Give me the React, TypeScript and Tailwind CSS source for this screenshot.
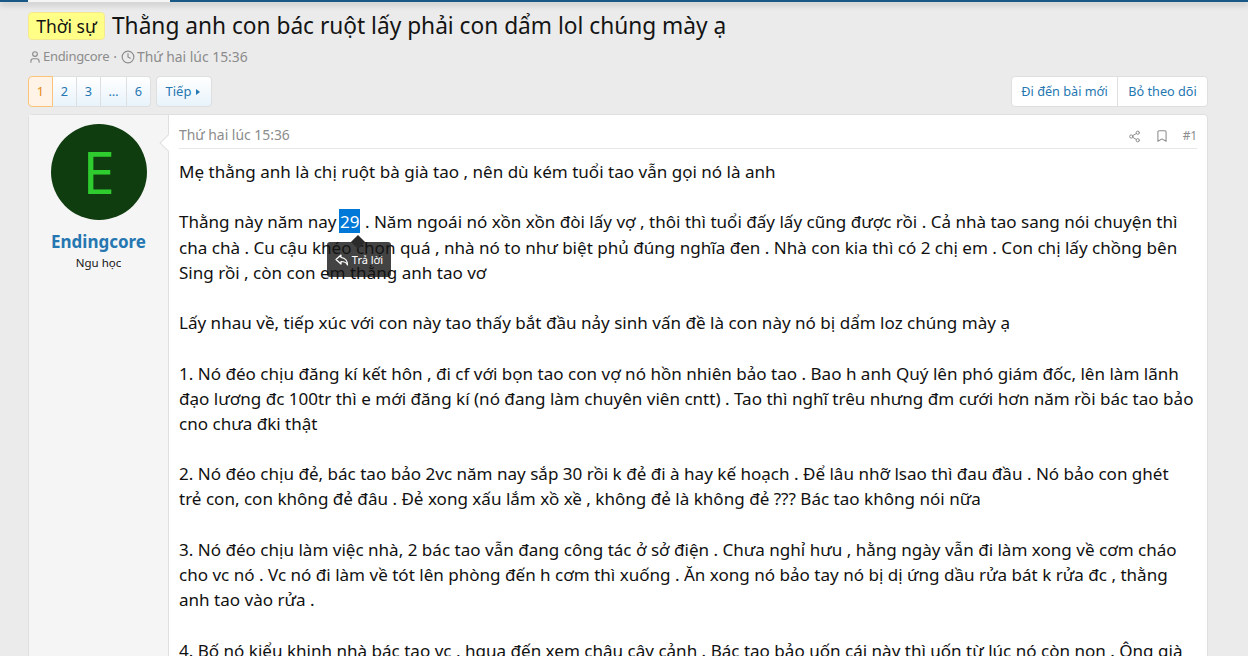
import { Bookmark, Clock, Share2, User } from 'lucide-react'

const BODY_FONT = "font-['Noto_Sans',sans-serif]"

const pages = ['2', '3', '…', '6']

const lines: string[] = [
  'Mẹ thằng anh là chị ruột bà già tao , nên dù kém tuổi tao vẫn gọi nó là anh',
  '',
  '@@',
  'cha chà . Cu cậu khéo chọn quá , nhà nó to như biệt phủ đúng nghĩa đen . Nhà con kia thì có 2 chị em . Con chị lấy chồng bên',
  'Sing rồi , còn con em thằng anh tao vơ',
  '',
  'Lấy nhau về, tiếp xúc với con này tao thấy bắt đầu nảy sinh vấn đề là con này nó bị dẩm loz chúng mày ạ',
  '',
  '1. Nó đéo chịu đăng kí kết hôn , đi cf với bọn tao con vợ nó hồn nhiên bảo tao . Bao h anh Quý lên phó giám đốc, lên làm lãnh',
  'đạo lương đc 100tr thì e mới đăng kí (nó đang làm chuyên viên cntt) . Tao thì nghĩ trêu nhưng đm cưới hơn năm rồi bác tao bảo',
  'cno chưa đki thật',
  '',
  '2. Nó đéo chịu đẻ, bác tao bảo 2vc năm nay sắp 30 rồi k đẻ đi à hay kế hoạch . Để lâu nhỡ lsao thì đau đầu . Nó bảo con ghét',
  'trẻ con, con không đẻ đâu . Đẻ xong xấu lắm xồ xề , không đẻ là không đẻ ??? Bác tao không nói nữa',
  '',
  '3. Nó đéo chịu làm việc nhà, 2 bác tao vẫn đang công tác ở sở điện . Chưa nghỉ hưu , hằng ngày vẫn đi làm xong về cơm cháo',
  'cho vc nó . Vc nó đi làm về tót lên phòng đến h cơm thì xuống . Ăn xong nó bảo tay nó bị dị ứng dầu rửa bát k rửa đc , thằng',
  'anh tao vào rửa .',
  '',
  '4. Bố nó kiểu khinh nhà bác tao vc , hqua đến xem chậu cây cảnh . Bác tao bảo uốn cái này thì uốn từ lúc nó còn non . Ông già',
]

export default function App() {
  return (
    <div className={`h-[656px] w-[1248px] overflow-hidden bg-[#ebebeb] ${BODY_FONT}`}>
      {/* Top strip */}
      <div className="flex h-[2px] shadow-[0_2px_6px_rgba(0,0,0,0.35)]">
        <div className="w-[28px] bg-[#185886]" />
        <div className="w-[142px] bg-[#f5f5f5]" />
        <div className="flex-1 bg-[#185886]" />
      </div>

      <div className="pr-[40px] pl-[28px]">
        {/* Title */}
        <div className="mt-[10px] flex h-[28px] items-center">
          <span className="flex h-[28px] w-[77px] items-center justify-center rounded-[4px] border border-[#f5e98f] bg-[#ffff88] text-[17.5px] text-[#141414]">
            Thời sự
          </span>
          <h1 className="ml-[7px] text-[22.7px] font-normal whitespace-nowrap text-[#141414]">
            Thằng anh con bác ruột lấy phải con dẩm lol chúng mày ạ
          </h1>
        </div>

        {/* Meta */}
        <div className="mt-[7px] flex h-[20px] items-center text-[13.9px] whitespace-nowrap text-[#8c8c8c]">
          <User size={14} strokeWidth={2} />
          <span className="ml-[1px] text-[13px] tracking-[-0.3px]">Endingcore</span>
          <span className="mx-[4px]">·</span>
          <Clock size={14} strokeWidth={2} />
          <span className="ml-[2px]">Thứ hai lúc 15:36</span>
        </div>

        {/* Page nav */}
        <div className="mt-[9px] flex h-[31px] justify-between text-[12.7px] text-[#2577b1]">
          <div className="flex">
            <div className="flex w-[25px] items-center justify-center rounded-l-[4px] border border-[#f9c479] bg-[#fef3e6] text-[#e6880f]">
              1
            </div>
            {pages.map((p, i) => (
              <div
                key={p}
                className={`flex items-center justify-center border border-l-0 border-[#dfdfdf] bg-gradient-to-b from-white to-[#e8f3fb] ${p === '…' ? 'w-[26px]' : 'w-[24px]'} ${i === pages.length - 1 ? 'rounded-r-[4px]' : ''}`}
              >
                {p}
              </div>
            ))}
            <div className="ml-[5px] flex w-[56px] items-center justify-center gap-[5px] rounded-[4px] border border-[#dfdfdf] bg-gradient-to-b from-white to-[#e8f3fb] pr-[2px] text-[13px]">
              Tiếp
              <span className="h-0 w-0 border-y-[3.5px] border-l-[4px] border-y-transparent border-l-[#2577b1]" />
            </div>
          </div>
          <div className="flex rounded-[4px] border border-[#dfdfdf] bg-white">
            <div className="flex w-[106px] items-center justify-center border-r border-[#dfdfdf]">Đi đến bài mới</div>
            <div className="flex w-[89px] items-center justify-center">Bỏ theo dõi</div>
          </div>
        </div>

        {/* Post */}
        <div className="mt-[7px] flex h-[600px] rounded-t-[4px] border border-[#dfdfdf] bg-white">
          <div className="flex w-[140px] shrink-0 flex-col items-center border-r border-[#dfdfdf] bg-[#f5f5f5] pt-[9px]">
            <div className="flex h-[96px] w-[96px] items-center justify-center rounded-full bg-[#0f3d0f] text-[58px] leading-none text-[#2fcc2f]">
              E
            </div>
            <div className="mt-[11px] text-[17px] leading-[22px] font-bold text-[#2577b1]">Endingcore</div>
            <div className="text-[11.5px] leading-[20px] text-[#141414]">Ngu học</div>
          </div>

          <div className="relative flex-1 px-[10px] pt-[6px]">
            {/* Arrow toward the avatar */}
            <span className="absolute top-[22px] -left-[7px] h-[12px] w-[12px] rotate-45 border-b border-l border-[#dfdfdf] bg-white" />

            <div className="flex h-[28px] items-center justify-between border-b border-[#e7e7e7] text-[13.9px] text-[#8c8c8c]">
              <span className="pt-[2px]">Thứ hai lúc 15:36</span>
              <div className="flex items-center gap-[14px] pt-[3px] text-[12px] tracking-[-0.2px]">
                <Share2 size={13} strokeWidth={1.8} />
                <Bookmark size={14} strokeWidth={1.8} />
                <span>#1</span>
              </div>
            </div>

            <div className="mt-[10px] text-[17.06px] leading-[25.2px] whitespace-nowrap text-[#111111]">
              {lines.map((line, i) =>
                line === '@@' ? (
                  <div key={i} className="relative">
                    Thằng này năm nay <span className="-ml-[2px] inline-block h-[24px] bg-[#0078d7] px-[1px] align-top text-white">29</span> . Năm ngoái nó xồn xồn đòi lấy vợ , thôi thì tuổi đấy lấy cũng được rồi . Cả nhà tao sang nói chuyện thì
                    {/* Selection quote tooltip */}
                    <div className="absolute top-[33px] left-[148px] flex h-[35px] w-[64px] items-center justify-center gap-[3px] rounded-[3px] bg-[#141414]/80 text-[11px] leading-none text-white">
                      <span className="absolute -top-[5px] left-[26px] h-[10px] w-[10px] rotate-45 bg-[#2b2b2b]" />
                      <svg width="14" height="12" viewBox="0 0 14 12" fill="none" stroke="white" strokeWidth="1.2" strokeLinejoin="round">
                        <path d="M6 1 1 5.5 6 10V7.5c3.5 0 5.5 1 6.5 3.5C12.500 7 10 4 6 3.500z" />
                      </svg>
                      Trả lời
                    </div>
                  </div>
                ) : (
                  <div key={i} className="h-[25.2px]">
                    {line}
                  </div>
                ),
              )}
            </div>
          </div>
        </div>
      </div>
    </div>
  )
}
